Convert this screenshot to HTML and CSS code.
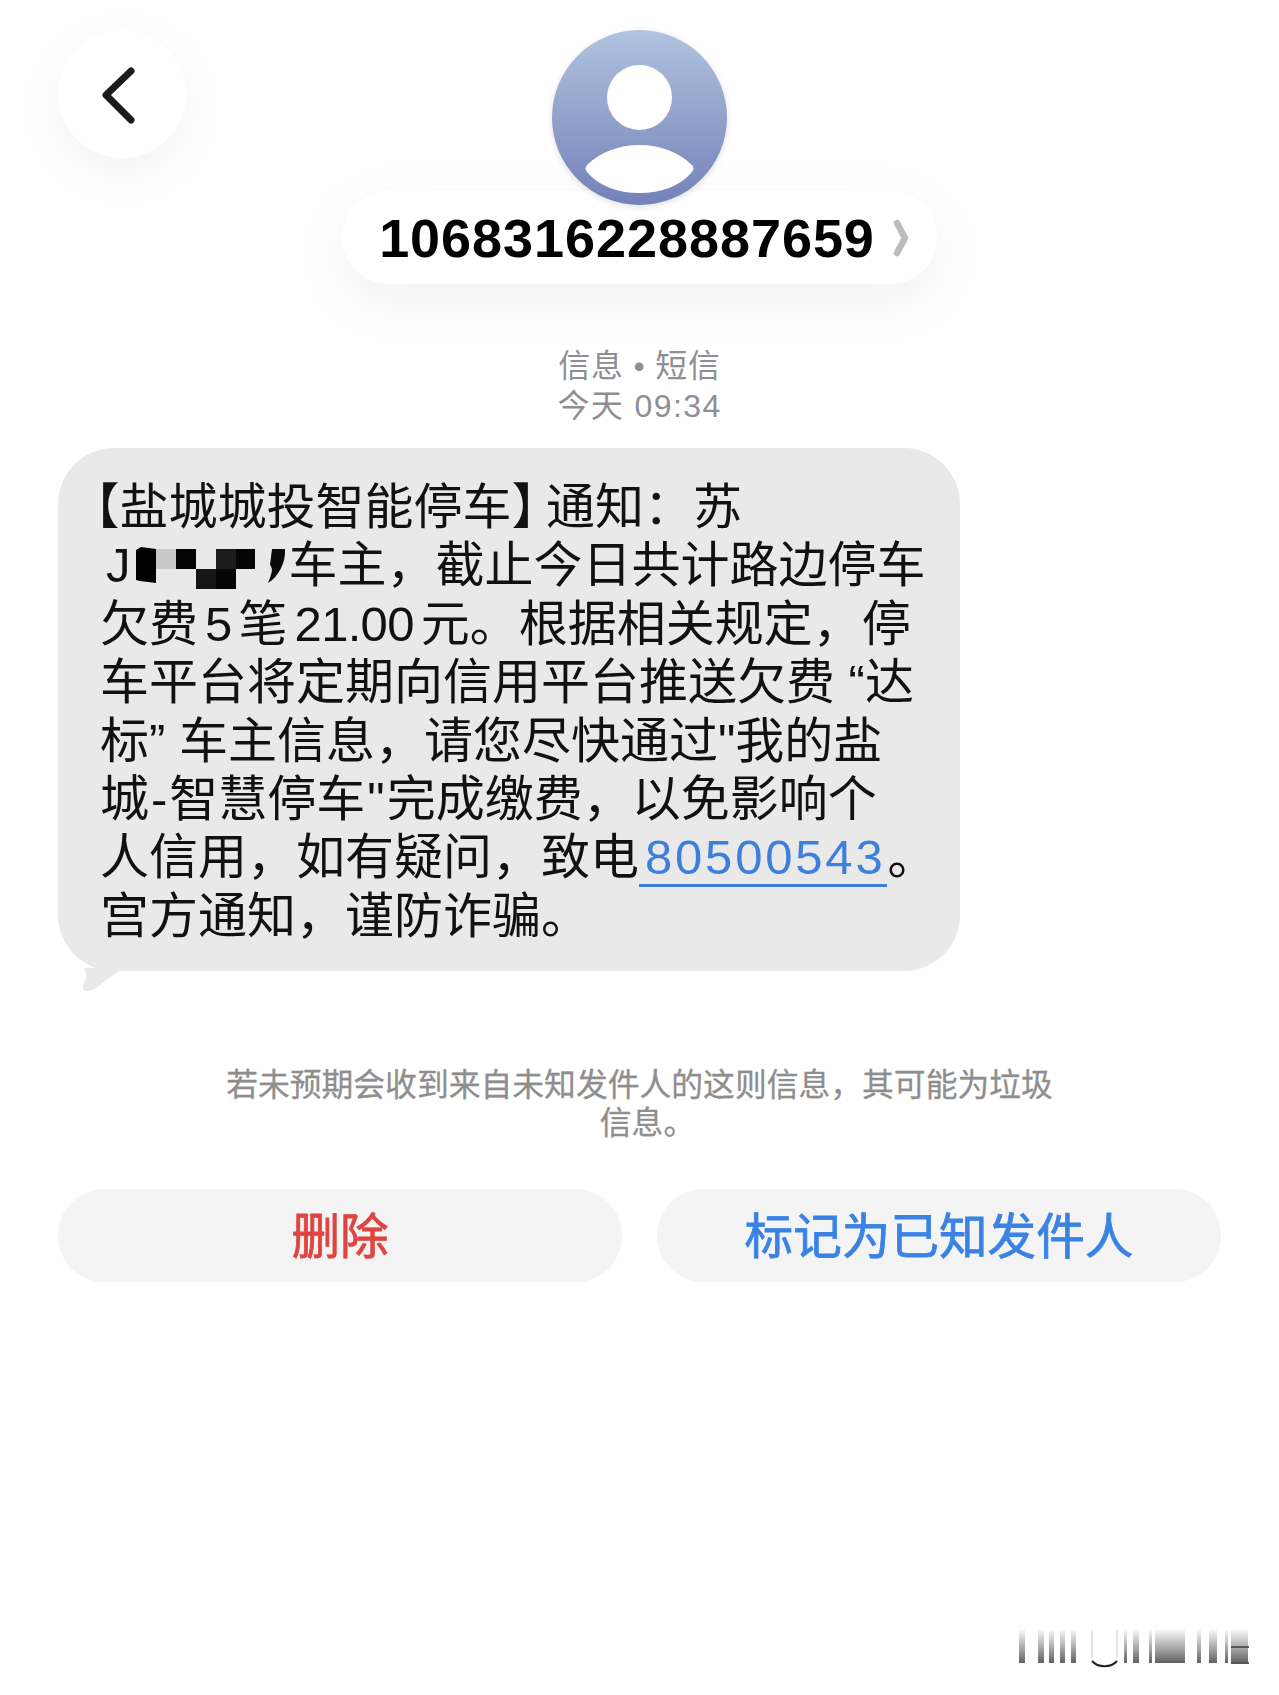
FILE: index.html
```html
<!DOCTYPE html>
<html lang="zh-CN">
<head>
    <meta charset="UTF-8">
    <meta name="viewport" content="width=device-width, initial-scale=1.0">
    <title>信息</title>
    <link rel="stylesheet" href="styles.css">
</head>
<body>
<div class="chat-header">
    <button class="back-button" title="返回">
        <svg class="back-icon" width="44" height="66" viewBox="0 0 44 66"><path d="M33 9 L8 33 L33 58" fill="none" stroke="#1c1c1e" stroke-width="7" stroke-linecap="round" stroke-linejoin="round"/></svg>
    </button>
    <div class="contact">
        <svg class="avatar" width="175" height="175" viewBox="0 0 175 175">
            <defs>
                <linearGradient id="avatar-bg" x1="0" y1="0" x2="0" y2="1">
                    <stop offset="0" stop-color="#b0c3df"/>
                    <stop offset="1" stop-color="#7481b9"/>
                </linearGradient>
            </defs>
            <circle cx="87.5" cy="87.5" r="87.5" fill="url(#avatar-bg)"/>
            <circle cx="87.5" cy="67.5" r="32.5" fill="#fff"/>
            <path d="M35 135 C48 122 67 115 87.5 115 C108 115 127 122 140 135 C142 137 142 140 140 142 C128 156 110 163 87.5 163 C65 163 47 156 35 142 C33 140 33 137 35 135 Z" fill="#fff"/>
        </svg>
        <div class="contact-pill">
            <span class="contact-number">1068316228887659</span>
            <svg width="17" height="38" viewBox="0 0 17 38"><path d="M4 4 L12 19 L4 34" fill="none" stroke="#bcbcbc" stroke-width="6.5" stroke-linecap="round" stroke-linejoin="round"/></svg>
        </div>
    </div>
</div>

<div class="chat-meta">
    <div>信息 • 短信</div>
    <div class="chat-time">今天 09:34</div>
</div>

<div class="message">
    <div class="message-content">
        <span class="bracket-open">【</span>盐城城投智能停车<span class="bracket-close">】</span>通知：苏<br>
        <span class="plate">J<svg class="mosaic" width="153" height="44" viewBox="0 0 153 44">
            <path d="M0 3 L5 0 L20 2 V36 L4 34 L0 33 Z" fill="#000"/>
            <rect x="20" y="2" width="20" height="20" fill="#c8c8c8"/>
            <rect x="40" y="2" width="20" height="20" fill="#050505"/>
            <rect x="60" y="22" width="20" height="20" fill="#161616"/>
            <rect x="80" y="22" width="20" height="20" fill="#050505"/>
            <rect x="80" y="2" width="20" height="20" fill="#1c1c1c"/>
            <rect x="100" y="2" width="19" height="20" fill="#050505"/>
            <path d="M136 2 H149 C150 16 142 30 132 36 C135 28 138 22 134 18 Z" fill="#0a0a0a"/>
        </svg></span>车主，截止今日共计路边停车<br>
        欠费<span class="num">5</span>笔<span class="num">21.00</span>元。根据相关规定，停<br>
        车平台将定期向信用平台推送欠费 “达<br>
        标” 车主信息，请您尽快通过"我的盐<br>
        城<span class="punct">-</span>智慧停车<span class="punct">"</span>完成缴费，以免影响个<br>
        人信用，如有疑问，致电<a class="phone-link">80500543</a>。<br>
        宫方通知，谨防诈骗。
    </div>
    <svg class="message-tail" width="48" height="32" viewBox="0 0 48 32"><path d="M0 0 H46 C36 6 26 14 18 20 C12 23 6 25 5 20 C4 16 12 10 6 0 Z" fill="#e9e9e9"/></svg>
</div>

<div class="spam-note">若未预期会收到来自未知发件人的这则信息，其可能为垃圾<span class="spam-note-end">信息。</span></div>

<div class="actions">
    <button class="action-button action-delete">删除</button>
    <button class="action-button action-known">标记为已知发件人</button>
</div>

<svg class="watermark" width="240" height="44" viewBox="0 0 240 44">
    <defs>
        <linearGradient id="wm-fade" x1="0" y1="0" x2="0" y2="1">
            <stop offset="0" stop-color="#555" stop-opacity=".05"/>
            <stop offset="1" stop-color="#444" stop-opacity=".85"/>
        </linearGradient>
    </defs>
    <g fill="url(#wm-fade)">
        <rect x="0" y="2" width="6" height="33"/>
        <rect x="19" y="2" width="6" height="33"/>
        <rect x="30" y="2" width="5" height="33"/>
        <rect x="41" y="2" width="5" height="33"/>
        <rect x="52" y="2" width="5" height="33"/>
        <rect x="105" y="2" width="3" height="33"/>
        <rect x="114" y="2" width="6" height="33"/>
        <rect x="130" y="2" width="3" height="33"/>
        <rect x="136" y="2" width="30" height="33"/>
        <rect x="178" y="2" width="4" height="33"/>
        <rect x="190" y="2" width="8" height="33"/>
        <rect x="206" y="2" width="3" height="33"/>
        <rect x="212" y="2" width="17" height="33"/>
    </g>
    <path d="M73 2 V30 M98 2 V30" stroke="#ccc" stroke-opacity=".5" stroke-width="2"/>
    <path d="M73 33 C79 40 92 40 98 33" fill="none" stroke="#222" stroke-width="2"/>
    <path d="M212 19 H230 M212 35 H230" stroke="#555" stroke-width="2"/>
</svg>
</body>
</html>
```

FILE: styles.css
```css
* {
    margin: 0;
    padding: 0;
    box-sizing: border-box;
    font-family: "Liberation Sans", "Noto Sans CJK SC", sans-serif;
}

body {
    width: 1279px;
    height: 1695px;
    overflow: hidden;
    background-color: #fff;
    color: #000;
}

.chat-header {
    display: grid;
    grid-template-columns: 1fr 595px 1fr;
    align-items: start;
    padding: 30px 58px 0;
}

.back-button {
    width: 128px;
    height: 128px;
    border-radius: 50%;
    border: none;
    background-color: #fff;
    box-shadow: 0 14px 50px rgba(0, 0, 0, 0.05);
    display: flex;
    align-items: center;
    justify-content: center;
}

.back-icon {
    margin: 1px 4px 0 0;
}

.contact {
    display: flex;
    flex-direction: column;
    align-items: center;
}

.avatar {
    display: block;
    position: relative;
    z-index: 1;
    filter: drop-shadow(0 2px 3px rgba(0, 0, 0, 0.12));
}

.contact-pill {
    width: 595px;
    height: 93px;
    margin-top: -14px;
    border-radius: 47px;
    background-color: #fff;
    box-shadow: 0 16px 60px rgba(0, 0, 0, 0.06);
    display: flex;
    align-items: center;
    justify-content: center;
    gap: 18px;
    padding-left: 10px;
}

.contact-number {
    font-size: 54px;
    font-weight: 700;
    letter-spacing: 0.95px;
    color: #000;
    position: relative;
    z-index: 2;
}

.chat-meta {
    margin-top: 62px;
    font-size: 32px;
    line-height: 40px;
    letter-spacing: 0.8px;
    color: #8e8e93;
    text-align: center;
}

.chat-time {
    letter-spacing: 1.4px;
}

.message {
    position: relative;
    width: 902px;
    margin: 22px 0 0 58px;
}

.message-content {
    padding: 30px 20px 26px 42px;
    background-color: #e9e9e9;
    border-radius: 56px;
    font-size: 49px;
    line-height: 58.4px;
    color: #111;
    white-space: nowrap;
}

.bracket-open {
    font-feature-settings: "halt";
    margin-left: -5px;
}

.bracket-close {
    font-feature-settings: "halt";
    margin-right: 10px;
}

.plate {
    margin-left: 6px;
}

.mosaic {
    vertical-align: -9px;
    margin-left: 5px;
}

.num {
    margin: 0 7px;
    letter-spacing: -0.7px;
}

.punct {
    margin: 0 2px;
}

.phone-link {
    color: #3d7fdd;
    letter-spacing: 2.8px;
    padding: 0 2px 0 6px;
    border-bottom: 3px solid #3d7fdd;
}

.message-tail {
    position: absolute;
    left: 20px;
    top: 520px;
}

.spam-note {
    margin-top: 95px;
    font-size: 31.8px;
    line-height: 38px;
    color: #8e8e8e;
    text-align: center;
    -webkit-text-stroke: 0.3px #8e8e8e;
}

.spam-note-end {
    display: block;
    padding-left: 16px;
}

.actions {
    display: flex;
    gap: 35px;
    margin: 47px 58px 0;
}

.action-button {
    flex: 1;
    height: 93px;
    padding-bottom: 6px;
    border: none;
    border-radius: 47px;
    background-color: #f4f4f5;
    font-size: 48.6px;
    -webkit-text-stroke: 0.8px currentColor;
}

.action-delete {
    color: #e0443e;
}

.action-known {
    color: #3a82e4;
}

.watermark {
    display: block;
    margin: 346px 0 0 1019px;
}
```
